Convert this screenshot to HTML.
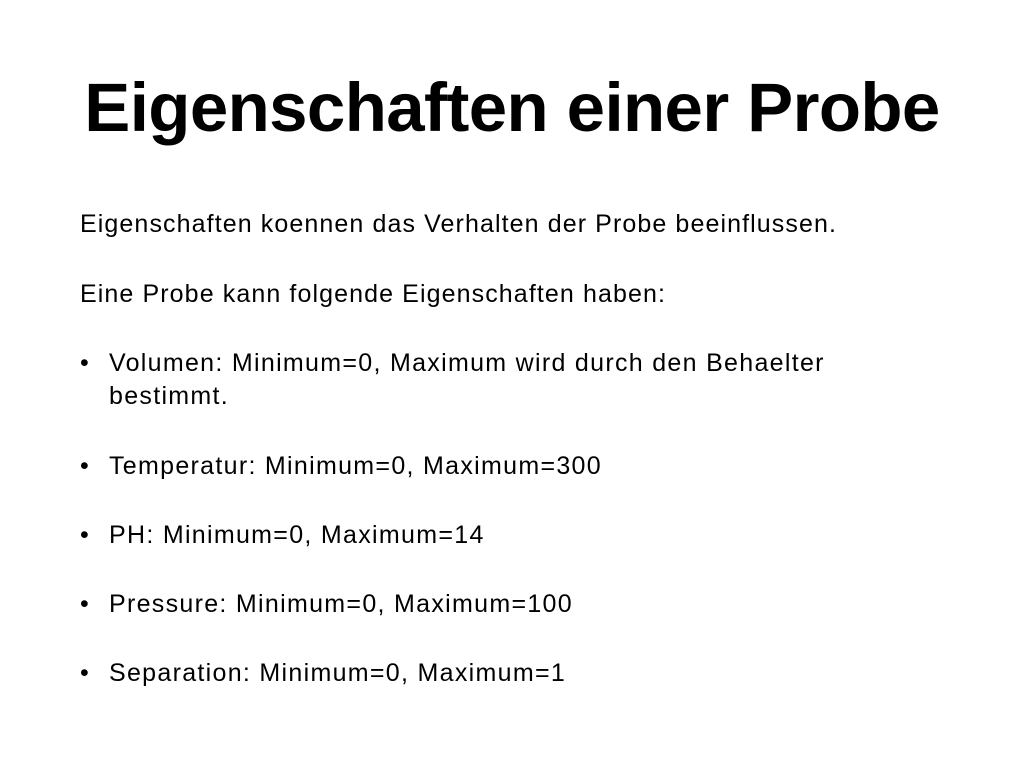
<!DOCTYPE html>
<html><head><meta charset="utf-8"><style>
html,body{margin:0;padding:0;background:#fff;}
body{width:1024px;height:768px;position:relative;overflow:hidden;font-family:"Liberation Sans",sans-serif;color:#000;}
h1{position:absolute;left:0;width:1024px;top:66px;margin:0;text-align:center;font-weight:bold;font-size:69px;line-height:84px;letter-spacing:-0.6px;}
.t{position:absolute;left:80px;font-size:25px;line-height:33px;white-space:nowrap;letter-spacing:1.1px;}
.b{position:absolute;left:80px;font-size:25px;line-height:33px;letter-spacing:1.3px;white-space:nowrap;}
.b span.d{position:absolute;left:0;}
.b div{padding-left:29px;}
</style></head><body>
<h1>Eigenschaften einer Probe</h1>
<div class="t" style="top:208px">Eigenschaften koennen das Verhalten der Probe beeinflussen.</div>
<div class="t" style="top:278px">Eine Probe kann folgende Eigenschaften haben:</div>
<div class="b" style="top:347px"><span class="d">•</span><div>Volumen: Minimum=0, Maximum wird durch den Behaelter<br>bestimmt.</div></div>
<div class="b" style="top:450px"><span class="d">•</span><div>Temperatur: Minimum=0, Maximum=300</div></div>
<div class="b" style="top:519px"><span class="d">•</span><div>PH: Minimum=0, Maximum=14</div></div>
<div class="b" style="top:588px"><span class="d">•</span><div>Pressure: Minimum=0, Maximum=100</div></div>
<div class="b" style="top:657px"><span class="d">•</span><div>Separation: Minimum=0, Maximum=1</div></div>
</body></html>
